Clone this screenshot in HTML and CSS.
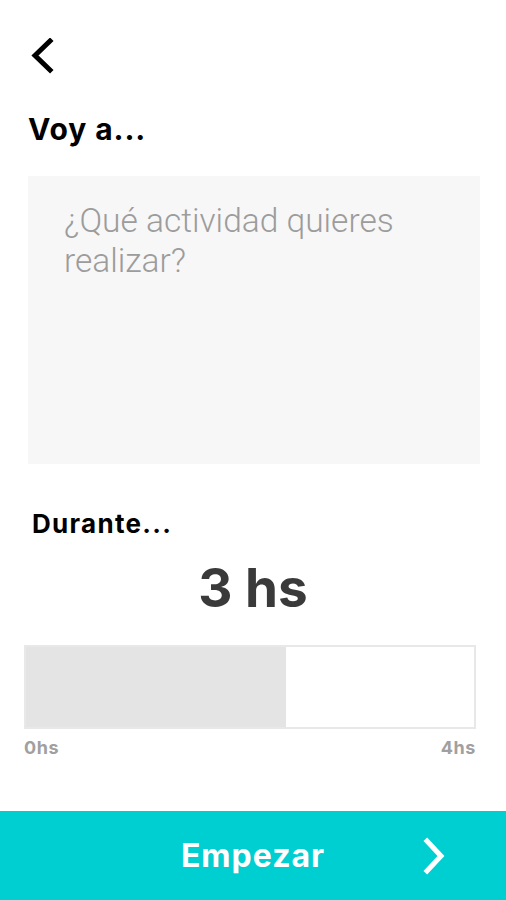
FILE: index.html
```html
<!DOCTYPE html>
<html lang="es">
<head>
<meta charset="utf-8">
<link rel="stylesheet" href="styles.css">
</head>
<body>
<div class="screen">
  <div class="topbar">
    <svg class="back" width="30" height="40" viewBox="0 0 30 40"><path d="M22 3 L7 17.5 L22 32" fill="none" stroke="#000" stroke-width="5" stroke-linecap="square" stroke-linejoin="miter"/></svg>
  </div>
  <h1 class="title">Voy a...</h1>
  <div class="activity">
    <div class="placeholder">¿Qué actividad quieres realizar?</div>
  </div>
  <h2 class="subtitle">Durante...</h2>
  <div class="hours">3 hs</div>
  <div class="slider">
    <div class="fill" style="width:58%"></div>
  </div>
  <div class="scale"><span>0hs</span><span>4hs</span></div>
  <button class="start">
    <span class="start-label">Empezar</span>
    <svg class="next" width="30" height="40" viewBox="0 0 30 40"><path d="M7 4 L21 19 L7 34" fill="none" stroke="#fff" stroke-width="5" stroke-linecap="square"/></svg>
  </button>
</div>
</body>
</html>
```

FILE: styles.css
```css
* { box-sizing: border-box; }
html, body { margin: 0; padding: 0; background: #fff; }
.screen {
  width: 506px;
  height: 900px;
  display: flex;
  flex-direction: column;
  font-family: "Inter", "DejaVu Sans", sans-serif;
}
.topbar {
  padding: 38px 0 0 28px;
  height: 78px;
}
.back { display: block; }
.title {
  margin: 34px 0 0 28px;
  font-size: 30px;
  font-weight: 700;
  line-height: 34px;
  color: #000;
  letter-spacing: 0.9px;
}
.activity {
  margin: 30px 26px 0 28px;
  height: 288px;
  background: #f7f7f7;
  padding: 25px 30px 0 36px;
}
.placeholder {
  font-family: "Roboto", sans-serif;
  font-weight: 300;
  font-size: 33.5px;
  line-height: 40px;
  color: #9c9c9c;
}
.subtitle {
  margin: 45px 0 0 32px;
  font-size: 26px;
  font-weight: 700;
  line-height: 30px;
  color: #000;
  letter-spacing: 1.3px;
}
.hours {
  margin-top: 21px;
  text-align: center;
  font-size: 53px;
  font-weight: 700;
  line-height: 56px;
  color: #3a3a3a;
}
.slider {
  margin: 29px 30px 0 24px;
  height: 84px;
  border: 2px solid #e8e8e8;
  background: #fff;
}
.fill {
  height: 100%;
  background: #e4e4e4;
}
.scale {
  margin: 9px 30px 0 24px;
  display: flex;
  justify-content: space-between;
  font-size: 18px;
  font-weight: 700;
  color: #a0a0a0;
  line-height: 20px;
  letter-spacing: 0.6px;
}
.start {
  margin-top: auto;
  height: 89px;
  border: 0;
  background: #00cfd1;
  display: flex;
  align-items: center;
  justify-content: center;
  position: relative;
  font-family: inherit;
  padding: 0;
}
.start-label {
  color: #fff;
  font-size: 32px;
  font-weight: 700;
  letter-spacing: 1px;
}
.next {
  position: absolute;
  right: 56px;
  top: 26px;
}
```
